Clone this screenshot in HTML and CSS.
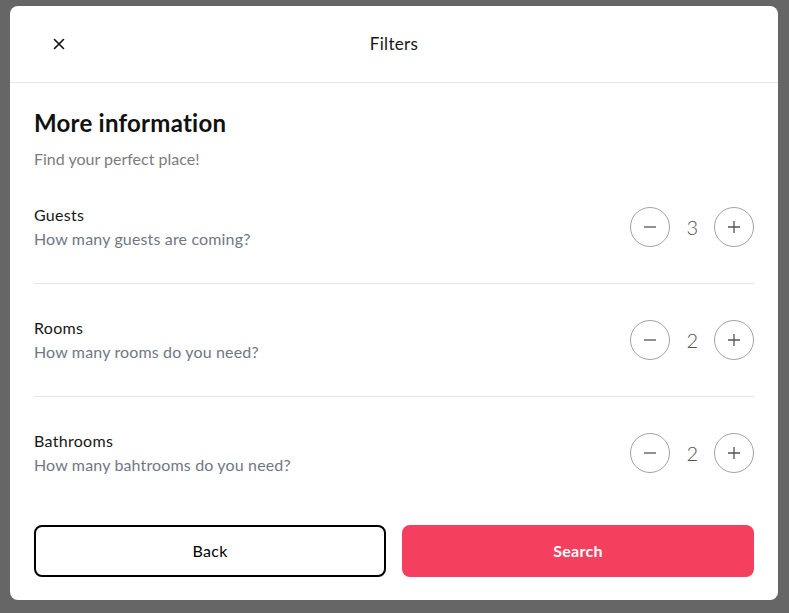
FILE: index.html
```html
<!DOCTYPE html>
<html lang="en">
<head>
<meta charset="utf-8">
<title>Filters</title>
<link rel="stylesheet" href="styles.css">
</head>
<body>
<div class="overlay">
  <div class="modal">
    <header class="modal-header">
      <button class="close-btn" aria-label="Close">
        <svg width="18" height="18" viewBox="0 0 18 18" fill="none" stroke="#111" stroke-width="1.6" stroke-linecap="round"><path d="M4.5 4.5 13.5 13.5M13.5 4.5 4.5 13.5"/></svg>
      </button>
      <div class="modal-title">Filters</div>
    </header>
    <main class="modal-body">
      <div class="heading">
        <div class="heading-title">More information</div>
        <div class="heading-sub">Find your perfect place!</div>
      </div>
      <div class="row">
        <div class="row-text">
          <div class="row-title">Guests</div>
          <div class="row-sub">How many guests are coming?</div>
        </div>
        <div class="counter">
          <button class="circle" aria-label="Decrease"><svg width="16" height="16" viewBox="0 0 16 16" stroke="#555" stroke-width="1.3"><path d="M2 8h12"/></svg></button>
          <div class="value">3</div>
          <button class="circle" aria-label="Increase"><svg width="16" height="16" viewBox="0 0 16 16" stroke="#555" stroke-width="1.3"><path d="M2 8h12M8 2v12"/></svg></button>
        </div>
      </div>
      <hr class="divider">
      <div class="row">
        <div class="row-text">
          <div class="row-title">Rooms</div>
          <div class="row-sub">How many rooms do you need?</div>
        </div>
        <div class="counter">
          <button class="circle" aria-label="Decrease"><svg width="16" height="16" viewBox="0 0 16 16" stroke="#555" stroke-width="1.3"><path d="M2 8h12"/></svg></button>
          <div class="value">2</div>
          <button class="circle" aria-label="Increase"><svg width="16" height="16" viewBox="0 0 16 16" stroke="#555" stroke-width="1.3"><path d="M2 8h12M8 2v12"/></svg></button>
        </div>
      </div>
      <hr class="divider">
      <div class="row">
        <div class="row-text">
          <div class="row-title">Bathrooms</div>
          <div class="row-sub">How many bahtrooms do you need?</div>
        </div>
        <div class="counter">
          <button class="circle" aria-label="Decrease"><svg width="16" height="16" viewBox="0 0 16 16" stroke="#555" stroke-width="1.3"><path d="M2 8h12"/></svg></button>
          <div class="value">2</div>
          <button class="circle" aria-label="Increase"><svg width="16" height="16" viewBox="0 0 16 16" stroke="#555" stroke-width="1.3"><path d="M2 8h12M8 2v12"/></svg></button>
        </div>
      </div>
    </main>
    <footer class="modal-footer">
      <button class="btn btn-outline">Back</button>
      <button class="btn btn-primary">Search</button>
    </footer>
  </div>
</div>
</body>
</html>
```
FILE: styles.css
```css
* { box-sizing: border-box; }
html, body { margin: 0; padding: 0; }
body {
  font-family: Lato, "Noto Sans", sans-serif;
  background: #666666;
  width: 789px;
  height: 613px;
  overflow: hidden;
}
.overlay {
  padding: 6px 0 0 10px;
}
.modal {
  width: 768px;
  height: 594px;
  background: #fff;
  border-radius: 8px;
  display: flex;
  flex-direction: column;
}
.modal-header {
  position: relative;
  display: flex;
  align-items: center;
  justify-content: center;
  padding: 24px;
  border-bottom: 1px solid #e5e5e5;
}
.close-btn {
  position: absolute;
  left: 36px;
  top: 50%;
  transform: translateY(-50%);
  padding: 4px;
  border: 0;
  background: none;
  display: flex;
}
.modal-title {
  font-size: 17px;
  line-height: 28px;
  font-weight: 400;
  letter-spacing: 0.3px;
  color: #171717;
}
.modal-body {
  padding: 24px;
  display: flex;
  flex-direction: column;
  gap: 32px;
}
.heading-title {
  font-size: 24px;
  line-height: 32px;
  font-weight: 700;
  letter-spacing: 0.25px;
  color: #111;
}
.heading-sub {
  margin-top: 8px;
  font-size: 16px;
  line-height: 24px;
  font-weight: 400;
  letter-spacing: 0;
  color: #7c7c7c;
}
.row {
  display: flex;
  align-items: center;
  justify-content: space-between;
}
.row-title {
  font-size: 16px;
  line-height: 24px;
  font-weight: 400;
  letter-spacing: 0.3px;
  color: #171717;
}
.row-sub {
  font-size: 16px;
  line-height: 24px;
  font-weight: 400;
  letter-spacing: 0.15px;
  color: #707784;
}
.counter {
  display: flex;
  align-items: center;
  gap: 16px;
}
.circle {
  width: 40px;
  height: 40px;
  border-radius: 50%;
  border: 1px solid #a3a3a3;
  background: #fff;
  display: flex;
  align-items: center;
  justify-content: center;
  padding: 0;
}
.value {
  font-size: 20px;
  line-height: 28px;
  font-weight: 300;
  color: #525252;
}
.divider {
  margin: 0;
  border: 0;
  border-top: 1px solid #e5e5e5;
}
.modal-footer {
  padding: 24px;
  display: flex;
  gap: 16px;
}
.btn {
  flex: 1;
  padding: 12px 0;
  border-radius: 8px;
  border: 2px solid;
  font-family: inherit;
  font-size: 16px;
  line-height: 24px;
  letter-spacing: 0.3px;
}
.btn-outline {
  background: #fff;
  border-color: #000;
  color: #000;
  font-weight: 400;
}
.btn-primary {
  background: #f43f5e;
  border-color: #f43f5e;
  color: #fff;
  font-weight: 700;
}
```
